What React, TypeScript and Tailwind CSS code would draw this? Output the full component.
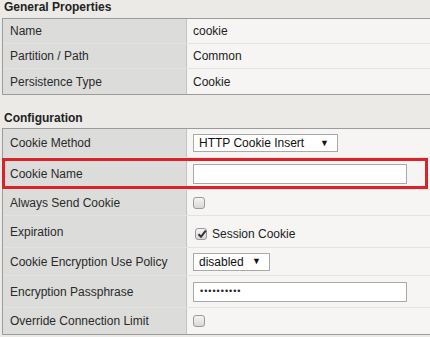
import React from "react";

const Checkbox = ({ checked = false }: { checked?: boolean }) => (
  <div className="relative w-[12px] h-[12px] rounded-[3px] border border-[#9a9a9a] bg-gradient-to-b from-[#f4f4f4] to-[#d8d8d8] flex items-center justify-center">
    {checked && (
      <svg width="10" height="10" viewBox="0 0 10 10" className="absolute left-[1px] top-[0px]">
        <path d="M1.5 5.2 L4 7.8 L8.8 1.6" fill="none" stroke="#333" strokeWidth="2" />
      </svg>
    )}
  </div>
);

const Select = ({ value, width }: { value: string; width: string }) => (
  <div className={`${width} h-[18px] bg-white border border-[#a9a9a9] flex items-center justify-between pl-[5px] pr-[8px] text-[12px] text-[#111]`}>
    <span>{value}</span>
    <span className="text-[9px] leading-none">▼</span>
  </div>
);

const Row = ({
  label,
  h,
  children,
  last = false,
  valueClass = "items-center",
}: {
  label: string;
  h: string;
  children: React.ReactNode;
  last?: boolean;
  valueClass?: string;
}) => (
  <div className={`flex ${h} ${last ? "" : "border-b border-[#e2e2e0]"}`}>
    <div className="w-[183px] shrink-0 bg-[#dcdcda] flex items-center pl-[7px] text-[#2a2a2a]">
      {label}
    </div>
    <div className="w-px bg-[#c4c4c2]" />
    <div className={`flex-1 bg-[#f6f5f3] flex pl-[6px] ${valueClass}`}>{children}</div>
  </div>
);

export default function App() {
  return (
    <div
      className="w-[430px] h-[337px] bg-[#ebeae6] text-[12px] text-[#222] overflow-hidden"
      style={{ fontFamily: '"Liberation Sans", Arial, sans-serif' }}
    >
      <div className="h-[18px] pl-[4px] font-bold leading-[15px] text-[#222]">General Properties</div>
      <div className="ml-[2px] border-l border-t border-b border-[#9c9c9c]">
        <Row label="Name" h="h-[25px]">cookie</Row>
        <Row label="Partition / Path" h="h-[25px]">Common</Row>
        <Row label="Persistence Type" h="h-[25px]" last>Cookie</Row>
      </div>
      <div className="h-[33px] pl-[4px] font-bold flex items-end pb-[1px] text-[#222]">Configuration</div>
      <div className="ml-[2px] border-l border-t border-b border-[#9c9c9c]">
        <Row label="Cookie Method" h="h-[29px]">
          <Select value="HTTP Cookie Insert" width="w-[145px]" />
        </Row>
        <div className="relative">
          <Row label="Cookie Name" h="h-[32px]">
            <div className="w-[214px] h-[20px] bg-white border border-[#a9a9a9]" />
          </Row>
          <div className="absolute left-[-1px] right-[2px] top-[0px] h-[31px] border-[3px] border-[#d9232b] pointer-events-none" />
        </div>
        <Row label="Always Send Cookie" h="h-[26px]">
          <Checkbox />
        </Row>
        <Row label="Expiration" h="h-[32px]" valueClass="items-center pt-[5px]">
          <div className="flex items-center gap-[5px] pl-[2px]">
            <Checkbox checked />
            <span className="text-[#222]">Session Cookie</span>
          </div>
        </Row>
        <Row label="Cookie Encryption Use Policy" h="h-[28px]">
          <Select value="disabled" width="w-[77px]" />
        </Row>
        <Row label="Encryption Passphrase" h="h-[32px]">
          <div className="w-[214px] h-[20px] bg-white border border-[#a9a9a9] flex items-center pl-[6px] text-[9px] tracking-[1px] text-[#222]">
            ••••••••••
          </div>
        </Row>
        <Row label="Override Connection Limit" h="h-[26px]" last>
          <Checkbox />
        </Row>
      </div>
    </div>
  );
}
